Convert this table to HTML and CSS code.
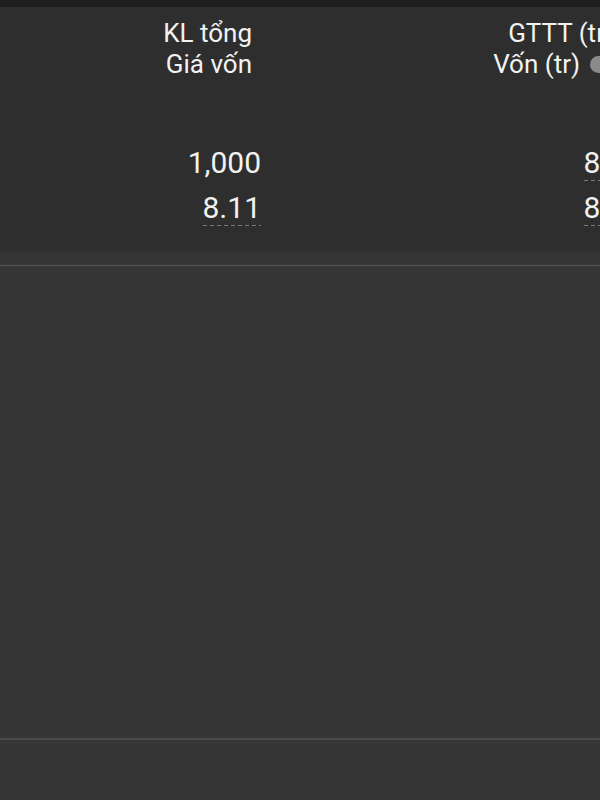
FILE: index.html
```html
<!DOCTYPE html>
<html lang="vi">
<head>
<meta charset="utf-8">
<link rel="stylesheet" href="styles.css">
</head>
<body>
<div class="topbar"></div>
<section class="panel">
  <div class="table">
    <div class="col col1">
      <div class="head">
        <div>KL tổng</div>
        <div>Giá vốn</div>
      </div>
      <div class="vals">
        <div class="val"><span>1,000</span></div>
        <div class="val"><span class="dash">8.11</span></div>
      </div>
    </div>
    <div class="col col2">
      <div class="head">
        <div class="gttt">GTTT (tr)</div>
        <div class="with-icon">Vốn (tr)<span class="info"></span></div>
      </div>
      <div class="vals">
        <div class="val"><span class="dash">8.15</span></div>
        <div class="val"><span class="dash">8.11</span></div>
      </div>
    </div>
  </div>
</section>
<div class="shadow"></div>
<main class="content">
  <div class="list"></div>
  <div class="footer"></div>
</main>
</body>
</html>
```
FILE: styles.css
```css
html, body {
  margin: 0;
  padding: 0;
  background: #363636;
  width: 600px;
  height: 800px;
  overflow: hidden;
  font-family: Roboto, "Noto Sans", sans-serif;
  color: #f2f2f2;
}
.topbar {
  height: 7px;
  background: #1e1e1e;
}
.panel {
  height: 243px;
  background: #2e2e2e;
  overflow: hidden;
}
.table {
  display: flex;
  width: 700px;
}
.col {
  display: flex;
  flex-direction: column;
  text-align: right;
}
.col1 { width: 262px; }
.col2 { width: 390px; }
.head {
  padding-top: 11px;
  font-size: 26px;
  line-height: 31px;
  height: 62px;
}
.col1 .head { padding-right: 10px; }
.col2 .head { padding-right: 45px; }
.gttt { margin-right: -7px; }
.with-icon {
  display: flex;
  justify-content: flex-end;
  align-items: center;
  gap: 10px;
}
.info {
  width: 17px;
  height: 17px;
  border-radius: 50%;
  background: #8a8a8a;
}
.vals {
  margin-top: 60px;
  font-size: 30px;
  line-height: 45px;
}
.col1 .vals { padding-right: 1px; }
.col2 .vals { padding-right: 10px; }
.val span { display: inline-block; }
.dash {
  background-image: repeating-linear-gradient(to right, #7a7a7a 0 4px, transparent 4px 7px);
  background-size: 100% 1px;
  background-repeat: no-repeat;
  background-position: 0 40px;
}
.shadow {
  height: 4px;
  background: linear-gradient(#303030, #363636);
}
.content {
  padding-top: 11px;
}
.list {
  height: 472px;
  border-top: 1px solid #575757;
}
.footer {
  border-top: 2px solid #4a4a4a;
  height: 60px;
}
```
